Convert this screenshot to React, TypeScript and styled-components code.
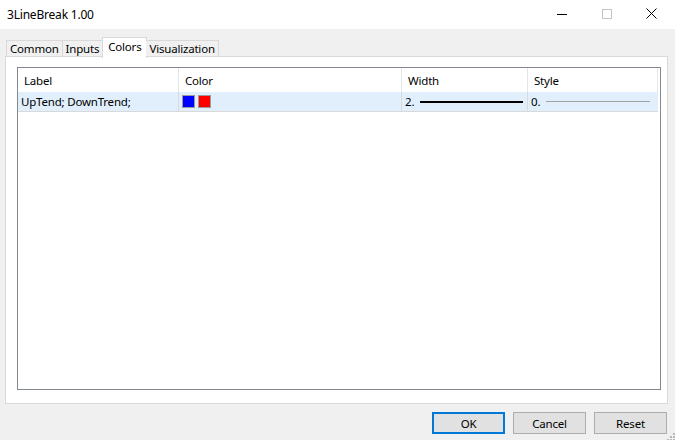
import React from 'react';
import styled, { createGlobalStyle } from 'styled-components';

const GlobalStyle = createGlobalStyle`
  html, body {
    margin: 0;
    padding: 0;
    background: #f0f0f0;
  }
  body {
    font-family: "Noto Sans", "Liberation Sans", sans-serif;
    font-size: 11.5px;
    letter-spacing: -0.2px;
    color: #000;
  }
`;

const tabs = ['Common', 'Inputs', 'Colors', 'Visualization'];

const columns = [
  { title: 'Label', width: 161 },
  { title: 'Color', width: 223 },
  { title: 'Width', width: 126 },
  { title: 'Style', width: 130 },
];

const App: React.FC = () => {
  return (
    <Window>
      <GlobalStyle />
      <TitleBar>
        <Title>3LineBreak 1.00</Title>
        <Controls>
          <ControlButton>
            <svg width="10" height="10" viewBox="0 0 10 10">
              <line x1="0" y1="5.5" x2="10" y2="5.5" stroke="#000" strokeWidth="1" />
            </svg>
          </ControlButton>
          <ControlButton>
            <svg width="10" height="10" viewBox="0 0 10 10">
              <rect x="0.5" y="0.5" width="9" height="9" fill="none" stroke="#c4c4c4" strokeWidth="1" />
            </svg>
          </ControlButton>
          <ControlButton>
            <svg width="11" height="11" viewBox="0 0 11 11">
              <path d="M0.5 0.5 L10.5 10.5 M10.5 0.5 L0.5 10.5" stroke="#000" strokeWidth="1" />
            </svg>
          </ControlButton>
        </Controls>
      </TitleBar>

      <Body>
        <TabStrip>
          {tabs.map((t) => (
            <Tab key={t} active={t === 'Colors'}>{t}</Tab>
          ))}
        </TabStrip>
        <Panel>
          <ListView>
            <HeaderRow>
              {columns.map((c) => (
                <HeaderCell key={c.title} w={c.width}>{c.title}</HeaderCell>
              ))}
              <HeaderFiller />
            </HeaderRow>
            <DataRow>
              <Cell w={columns[0].width}>UpTend; DownTrend;</Cell>
              <Cell w={columns[1].width}>
                <Swatch color="#0000ff" />
                <Swatch color="#ff0000" />
              </Cell>
              <Cell w={columns[2].width}>
                <CellNum>2.</CellNum>
                <LineSample thickness={2} color="#000" length={103} />
              </Cell>
              <Cell w={columns[3].width}>
                <CellNum>0.</CellNum>
                <LineSample thickness={1} color="#a0a0a0" length={104} />
              </Cell>
            </DataRow>
          </ListView>
        </Panel>
        <ButtonBar>
          <DialogButton primary>OK</DialogButton>
          <DialogButton>Cancel</DialogButton>
          <DialogButton>Reset</DialogButton>
        </ButtonBar>
        <Grip>
          <svg width="10" height="10" viewBox="0 0 10 10">
            {[[8, 0], [8, 3], [5, 3], [8, 6], [5, 6], [2, 6]].map(([x, y]) => (
              <rect key={`${x}-${y}`} x={x} y={y + 1} width="2" height="2" fill="#b8b8b8" />
            ))}
          </svg>
        </Grip>
      </Body>
    </Window>
  );
};

const Window = styled.div`
  width: 675px;
  height: 440px;
  display: flex;
  flex-direction: column;
  background: #f0f0f0;
  overflow: hidden;
`;

const TitleBar = styled.div`
  height: 29px;
  background: #fff;
  display: flex;
  align-items: center;
  justify-content: space-between;
  flex-shrink: 0;
`;

const Title = styled.div`
  padding-left: 7px;
  font-size: 12px;
  padding-bottom: 1px;
`;

const Controls = styled.div`
  display: flex;
  height: 100%;
`;

const ControlButton = styled.div`
  width: 45px;
  height: 100%;
  display: flex;
  align-items: center;
  justify-content: center;
  padding-bottom: 2px;
  box-sizing: border-box;
  &:last-child {
    width: 46px;
    padding-right: 2px;
  }
`;

const Body = styled.div`
  position: relative;
  flex: 1;
  display: flex;
  flex-direction: column;
  padding: 8px 7px 0 5px;
`;

const TabStrip = styled.div`
  display: flex;
  align-items: flex-end;
  height: 20px;
  padding-left: 1px;
  position: relative;
  z-index: 1;
`;

const Tab = styled.div<{ active?: boolean }>`
  height: ${(p) => (p.active ? '21px' : '17px')};
  margin-bottom: ${(p) => (p.active ? '-1px' : '0')};
  margin-left: ${(p) => (p.active ? '-1px' : '0')};
  margin-right: ${(p) => (p.active ? '-1px' : '0')};
  padding: ${(p) => (p.active ? '1px 5px 0' : '0 3px')};
  display: flex;
  align-items: ${(p) => (p.active ? 'flex-start' : 'center')};
  box-sizing: border-box;
  white-space: nowrap;
  border: 1px solid #d9d9d9;
  border-bottom: ${(p) => (p.active ? 'none' : '1px solid #d9d9d9')};
  border-left: ${(p) => (p.active ? '1px solid #d9d9d9' : 'none')};
  background: ${(p) => (p.active ? '#fff' : '#f0f0f0')};
  &:first-child {
    border-left: 1px solid #d9d9d9;
  }
`;

const Panel = styled.div`
  height: 348px;
  background: #fff;
  border: 1px solid #d9d9d9;
  box-sizing: border-box;
  padding: 10px 8px 13px 11px;
  margin-top: -1px;
  display: flex;
`;

const ListView = styled.div`
  flex: 1;
  border: 1px solid #828790;
  background: #fff;
  display: flex;
  flex-direction: column;
`;

const HeaderRow = styled.div`
  display: flex;
  height: 24px;
`;

const HeaderCell = styled.div<{ w: number }>`
  width: ${(p) => p.w}px;
  box-sizing: border-box;
  padding-left: 6px;
  display: flex;
  align-items: center;
  border-right: 1px solid #e5e5e5;
  flex-shrink: 0;
`;

const HeaderFiller = styled.div`
  flex: 1;
`;

const DataRow = styled.div`
  display: flex;
  height: 20px;
  background: #e1effc;
  border-bottom: 1px solid #d9d9d9;
  box-sizing: border-box;
  margin-right: 2px;
`;

const Cell = styled.div<{ w: number }>`
  width: ${(p) => p.w}px;
  box-sizing: border-box;
  display: flex;
  align-items: center;
  padding-left: 3px;
  border-right: 1px solid #d9d9d9;
  flex-shrink: 0;
  white-space: nowrap;
  &:last-child {
    border-right: none;
  }
`;

const Swatch = styled.div<{ color: string }>`
  width: 13px;
  height: 13px;
  box-sizing: border-box;
  border: 1px solid #9a9a9a;
  background: ${(p) => p.color};
  margin-right: 3px;
`;

const CellNum = styled.span`
  width: 14px;
  flex-shrink: 0;
`;

const LineSample = styled.div<{ thickness: number; color: string; length: number }>`
  width: ${(p) => p.length}px;
  height: ${(p) => p.thickness}px;
  background: ${(p) => p.color};
  margin-left: 1px;
`;

const ButtonBar = styled.div`
  display: flex;
  justify-content: flex-end;
  gap: 8px;
  padding-top: 8px;
  padding-right: 1px;
`;

const DialogButton = styled.div<{ primary?: boolean }>`
  width: 73px;
  height: 22px;
  box-sizing: border-box;
  display: flex;
  align-items: center;
  justify-content: center;
  background: #e1e1e1;
  border: ${(p) => (p.primary ? '2px solid #0078d7' : '1px solid #adadad')};
`;

const Grip = styled.div`
  position: absolute;
  right: 0;
  bottom: 0;
  width: 10px;
  height: 10px;
`;

export default App;
